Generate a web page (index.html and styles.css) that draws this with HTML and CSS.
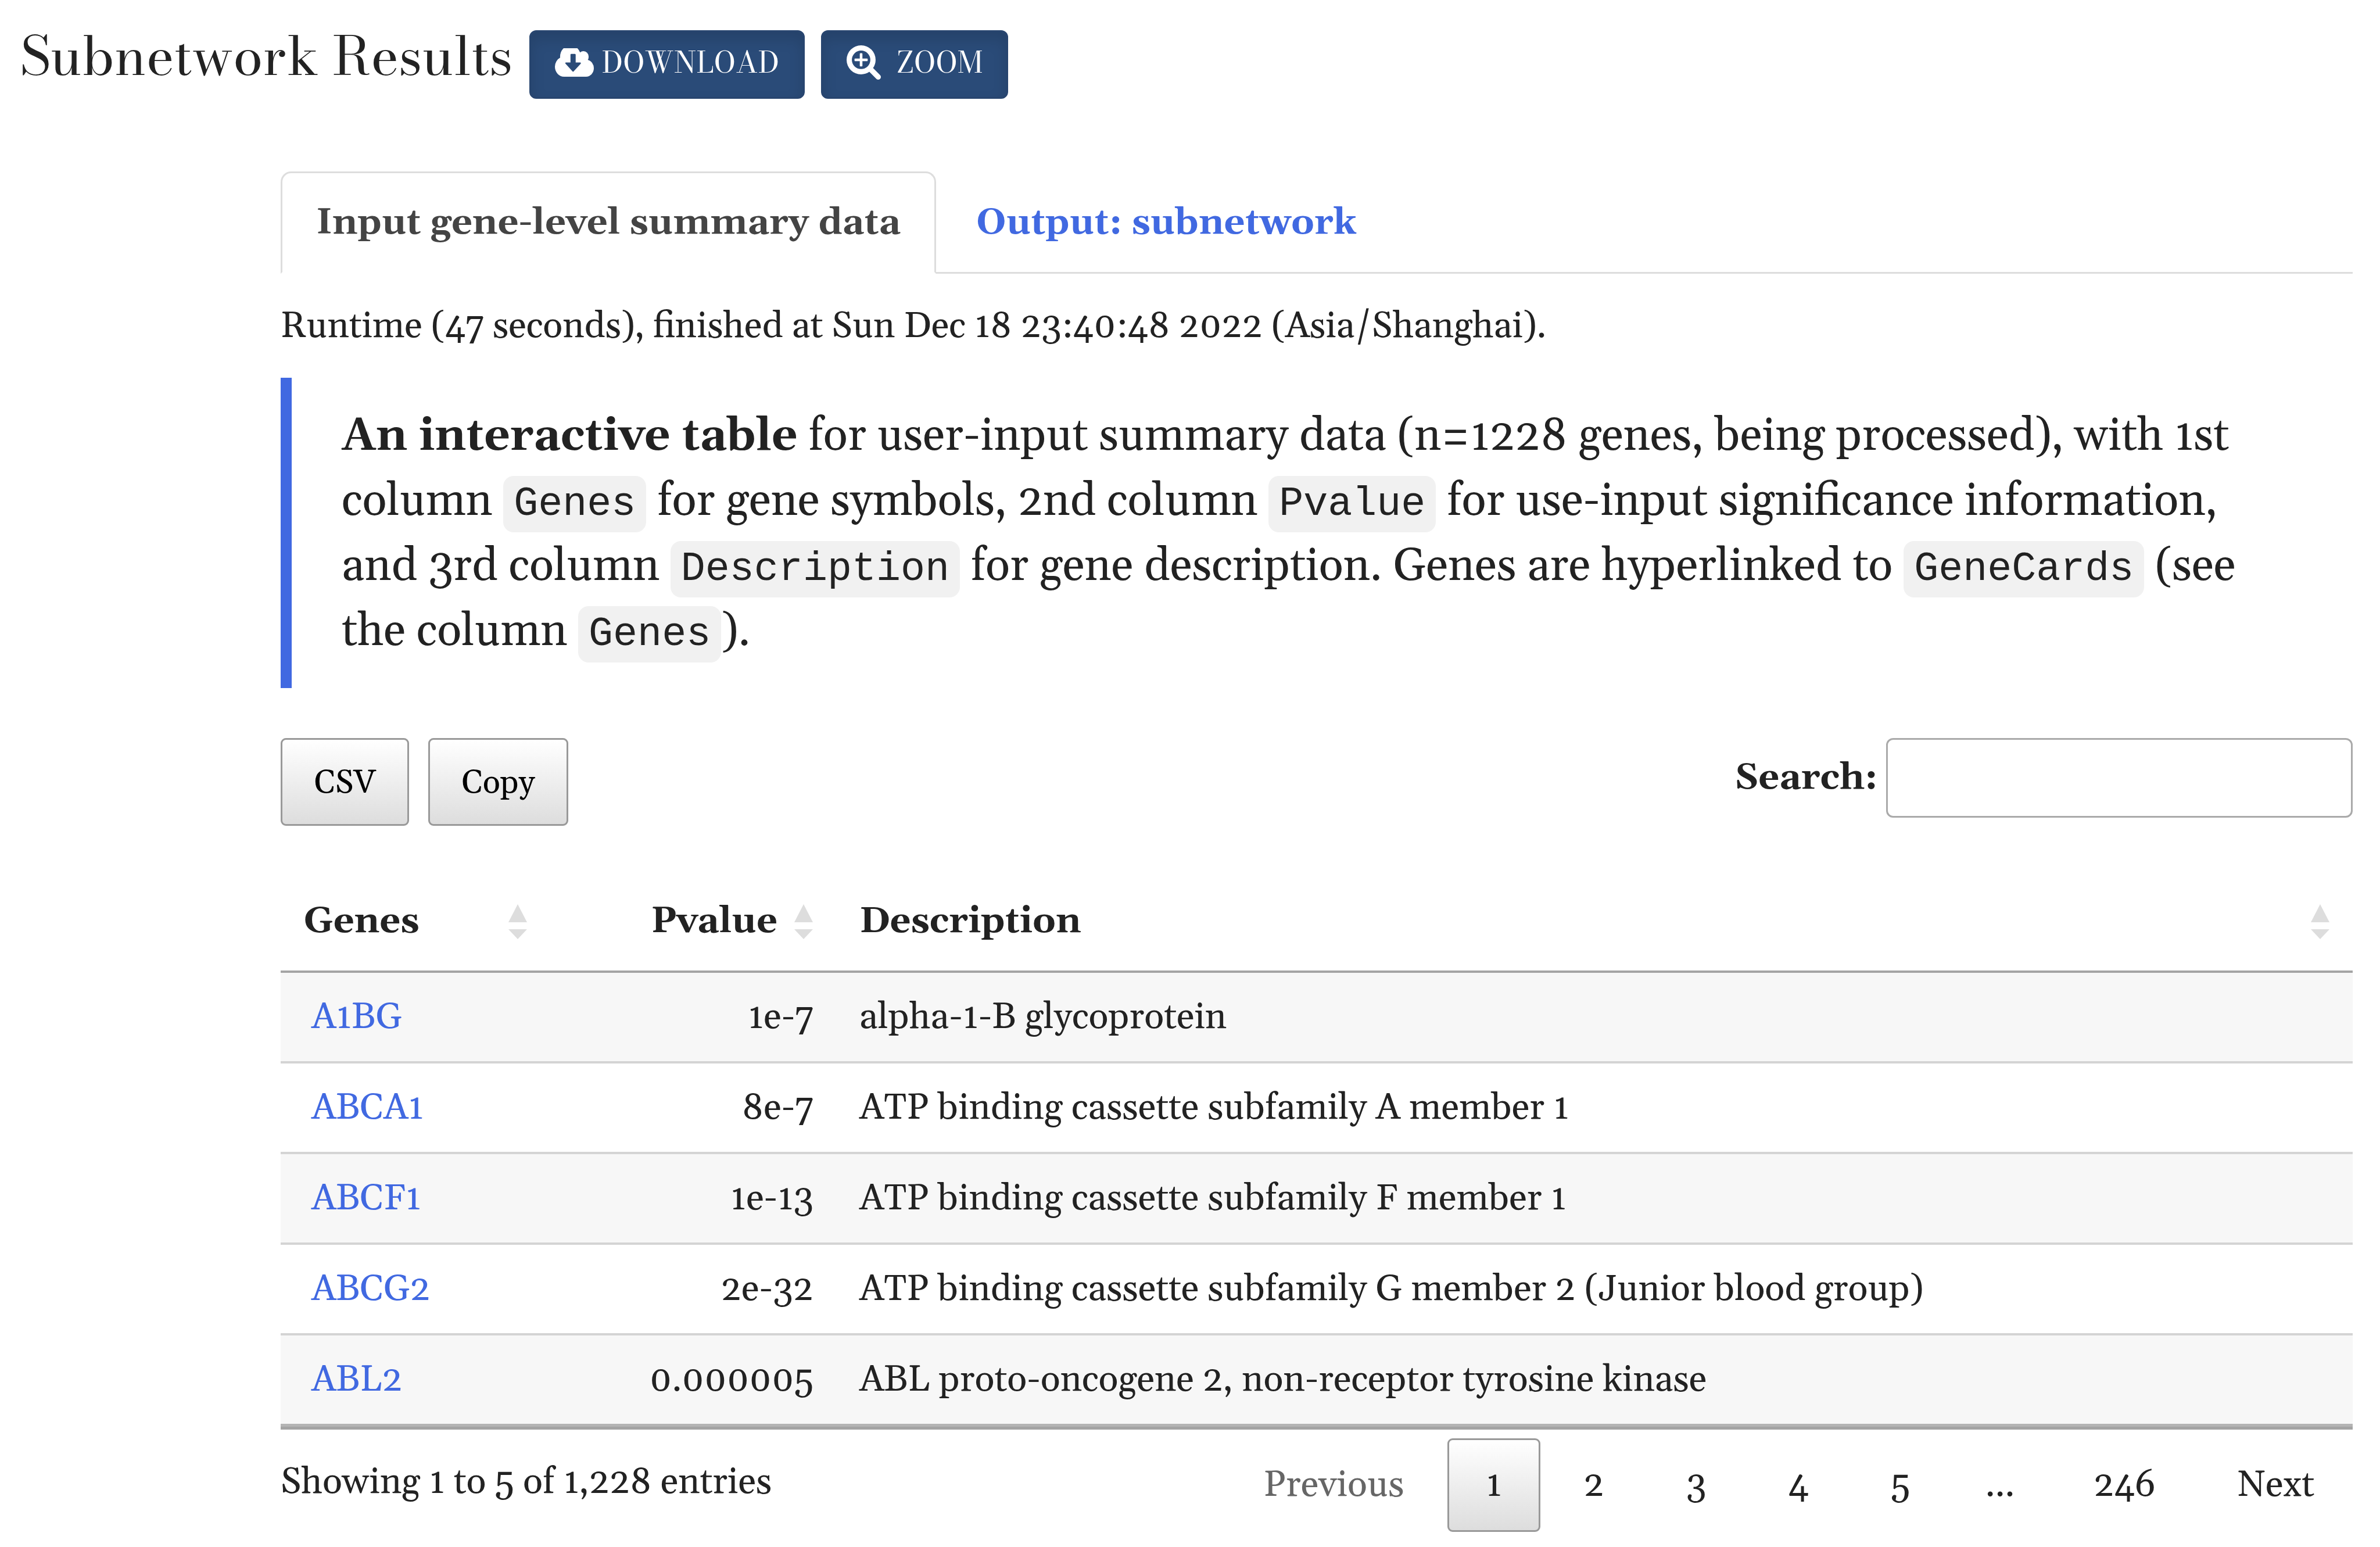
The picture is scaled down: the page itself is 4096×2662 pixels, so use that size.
FILE: index.html
```html
<!DOCTYPE html>
<html lang="en">
<head>
<meta charset="utf-8">
<title>Subnetwork Results</title>
<link rel="stylesheet" href="styles.css">
</head>
<body>
<header class="page-header">
  <h1 class="page-title">Subnetwork Results</h1>
  <button class="action" type="button">
    <svg class="icon-cloud" viewBox="-64 256 1920 1280" preserveAspectRatio="none" aria-hidden="true"><path d="M1216 928q0-14-9-23t-23-9h-224v-352q0-13-9.500-22.500t-22.500-9.500h-192q-13 0-22.500 9.500t-9.500 22.500v352h-224q-13 0-22.500 9.500t-9.500 22.500q0 14 9 23l352 352q9 9 23 9t23-9l351-351q10-12 10-24zm640 224q0 159-112.500 271.500t-271.500 112.500h-1088q-185 0-316.500-131.500t-131.500-316.500q0-130 70-240t188-165q-2-30-2-43 0-212 150-362t362-150q156 0 285.500 87t188.500 231q71-62 166-62 106 0 181 75t75 181q0 76-41 138 130 31 213.500 135.500t83.500 238.500z"/></svg>
    <span>DOWNLOAD</span>
  </button>
  <button class="action action-wide" type="button">
    <svg class="icon-zoom" viewBox="64 128 1664 1664" aria-hidden="true"><path d="M1088 800v64q0 13-9.500 22.500t-22.500 9.500h-224v224q0 13-9.500 22.500t-22.500 9.500h-64q-13 0-22.500-9.500t-9.500-22.500v-224h-224q-13 0-22.500-9.500t-9.500-22.500v-64q0-13 9.500-22.500t22.500-9.500h224v-224q0-13 9.500-22.500t22.500-9.500h64q13 0 22.500 9.500t9.500 22.500v224h224q13 0 22.500 9.500t9.500 22.500zm128 32q0-185-131.500-316.500t-316.500-131.500-316.500 131.500-131.500 316.500 131.500 316.500 316.500 131.500 316.500-131.500 131.500-316.500zm512 832q0 53-37.500 90.500t-90.500 37.500q-54 0-90-38l-343-342q-179 124-399 124-143 0-273.500-55.500t-225-150-150-225-55.500-273.500 55.500-273.500 150-225 225-150 273.500-55.500 273.500 55.500 225 150 150 225 55.500 273.500q0 220-124 399l343 343q37 37 37 90z"/></svg>
    <span>ZOOM</span>
  </button>
</header>

<main class="content">
  <nav class="tabs">
    <a class="tab tab-active" href="#input" aria-current="page">Input gene-level summary data</a>
    <a class="tab" href="#output">Output: subnetwork</a>
  </nav>

  <p class="runtime">Runtime (47 seconds), finished at Sun Dec 18 23:40:48 2022 (Asia/Shanghai).</p>

  <blockquote class="note"><strong>An interactive table</strong> for user-input summary data (n=1228 genes, being processed), with 1st column <code>Genes</code> for gene symbols, 2nd column <code>Pvalue</code> for use-input significance information, and 3rd column <code>Description</code> for gene description. Genes are hyperlinked to <code>GeneCards</code> (see the column <code>Genes</code>).</blockquote>

  <div class="toolbar">
    <div class="exports">
      <button class="export" type="button">CSV</button>
      <button class="export" type="button">Copy</button>
    </div>
    <div class="search">
      <label for="search">Search:</label>
      <input id="search" type="search">
    </div>
  </div>

  <table class="genes">
    <colgroup><col class="col-gene"><col class="col-pvalue"><col></colgroup>
    <thead>
      <tr>
        <th scope="col"><span class="head">Genes<svg class="sort" viewBox="0 0 32 60" aria-hidden="true"><path d="M16 0 32 31H0zM0 43h32L16 60z"/></svg></span></th>
        <th scope="col"><span class="head head-end">Pvalue<svg class="sort" viewBox="0 0 32 60" aria-hidden="true"><path d="M16 0 32 31H0zM0 43h32L16 60z"/></svg></span></th>
        <th scope="col"><span class="head">Description<svg class="sort" viewBox="0 0 32 60" aria-hidden="true"><path d="M16 0 32 31H0zM0 43h32L16 60z"/></svg></span></th>
      </tr>
    </thead>
    <tbody>
      <tr><td class="gene"><a href="#A1BG">A1BG</a></td><td class="number">1e-7</td><td>alpha-1-B glycoprotein</td></tr>
      <tr><td class="gene"><a href="#ABCA1">ABCA1</a></td><td class="number">8e-7</td><td>ATP binding cassette subfamily A member 1</td></tr>
      <tr><td class="gene"><a href="#ABCF1">ABCF1</a></td><td class="number">1e-13</td><td>ATP binding cassette subfamily F member 1</td></tr>
      <tr><td class="gene"><a href="#ABCG2">ABCG2</a></td><td class="number">2e-32</td><td>ATP binding cassette subfamily G member 2 (Junior blood group)</td></tr>
      <tr><td class="gene"><a href="#ABL2">ABL2</a></td><td class="number">0.000005</td><td>ABL proto-oncogene 2, non-receptor tyrosine kinase</td></tr>
    </tbody>
  </table>

  <div class="table-footer">
    <p class="info">Showing 1 to 5 of 1,228 entries</p>
    <nav class="pages" aria-label="Table pages">
      <button class="page" type="button" disabled>Previous</button>
      <button class="page page-current" type="button" aria-current="page">1</button>
      <button class="page" type="button">2</button>
      <button class="page" type="button">3</button>
      <button class="page" type="button">4</button>
      <button class="page" type="button">5</button>
      <span class="ellipsis">…</span>
      <button class="page" type="button">246</button>
      <button class="page" type="button">Next</button>
    </nav>
  </div>
</main>
</body>
</html>
```
FILE: styles.css
```css
* { box-sizing: border-box; }

body {
  margin: 0;
  background: #fff;
  color: #222;
  font-family: Gelasio, Georgia, "Liberation Serif", serif;
  font-size: 63px;
  line-height: 90px;
  font-variant-numeric: oldstyle-nums;
}

button, input { font: inherit; font-variant-numeric: inherit; color: inherit; }
a { color: #4169e1; text-decoration: none; }

.page-header {
  display: flex;
  align-items: flex-start;
  gap: 28px;
  padding: 52px 34px 0;
}

.page-title {
  margin: 0;
  font: 400 92px/88px "Bodoni Moda", "Liberation Serif", serif;
}

.action {
  display: flex;
  align-items: center;
  gap: 14px;
  height: 118px;
  padding: 0 41px 8px;
  border: 3px solid #28456f;
  border-radius: 12px;
  background: #2a4b78;
  box-shadow: inset 0 12px 24px rgba(0, 0, 0, .12);
  color: #fff;
  font: 400 50px/60px "Bodoni Moda", "Liberation Serif", serif;
}
.action-wide { gap: 28px; }
.action svg { fill: #fff; }
.icon-cloud { width: 67px; height: 49px; }
.icon-zoom { width: 59px; height: 59px; }

.content { padding: 125px 47px 0 483px; }

.tabs {
  display: flex;
  gap: 8px;
  border-bottom: 3px solid #ddd;
}
.tab {
  margin-bottom: -3px;
  padding: 41px 58px 39px;
  border: 3px solid transparent;
  font-weight: 700;
}
.tab-active {
  border-color: #ddd #ddd #fff;
  border-radius: 18px 18px 0 0;
  background: #fff;
  color: #444;
}

.runtime { margin: 46px 0 43px; }

.note {
  margin: 0 0 86px;
  padding: 46px 86px 40px;
  border-left: 19px solid #4169e1;
  font-size: 78px;
  line-height: 112px;
}
.note code {
  padding: 9px 18px;
  border-radius: 18px;
  background: #f1f1f1;
  font: 70px/70px "Liberation Mono", monospace;
}

.toolbar {
  display: flex;
  justify-content: space-between;
  align-items: flex-start;
  margin-bottom: 77px;
}
.exports { display: flex; gap: 33px; }
.export {
  height: 151px;
  padding: 4px 55px 0;
  border: 3px solid #999;
  border-radius: 9px;
  background: linear-gradient(#fff, #ddd);
  color: #000;
  font-size: 56px;
}
.search {
  display: flex;
  align-items: center;
  gap: 14px;
  font-weight: 700;
}
.search input {
  width: 803px;
  height: 137px;
  padding: 0 22px;
  border: 3px solid #aaa;
  border-radius: 12px;
  background: #fff;
  font-weight: 400;
}

.genes {
  width: 100%;
  table-layout: fixed;
  border-collapse: separate;
  border-spacing: 0;
  border-bottom: 5px solid #a4a4a4;
}
.col-gene { width: 464px; }
.col-pvalue { width: 492px; }
.genes th {
  padding: 43px 40px 39px;
  border-bottom: 4px solid #a4a4a4;
  font-weight: 700;
  text-align: left;
}
.head {
  display: flex;
  justify-content: space-between;
  align-items: center;
}
.head-end { justify-content: flex-end; gap: 29px; }
.sort { width: 32px; height: 60px; fill: #ddd; }
.genes td {
  padding: 32px 39px 30px 40px;
  border-top: 4px solid #d4d4d4;
}
.genes tbody tr:first-child td { border-top: 0; }
.genes tbody tr:last-child td { border-bottom: 5px solid #b4b4b4; }
.genes tbody tr:nth-child(odd) { background: #f7f7f7; }
.genes .gene { padding-left: 53px; }
.genes .number { text-align: right; }

.table-footer {
  display: flex;
  justify-content: space-between;
  align-items: flex-start;
  padding-top: 15px;
}
.info { margin: 31px 0 0; }
.pages { display: flex; align-items: center; gap: 9px; }
.page {
  height: 161px;
  padding: 0 63px;
  border: 3px solid transparent;
  border-radius: 9px;
  background: none;
}
.page:disabled { color: #666; }
.page-current {
  border-color: #999;
  background: linear-gradient(#fff, #ddd);
}
.ellipsis { padding: 0 63px 0 52px; }
```
